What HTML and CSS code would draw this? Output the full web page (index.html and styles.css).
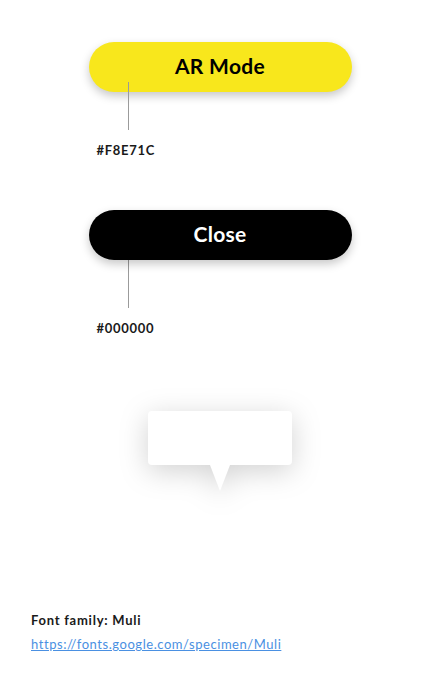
FILE: index.html
```html
<!DOCTYPE html>
<html lang="en">
<head>
  <meta charset="UTF-8">
  <meta name="viewport" content="width=device-width, initial-scale=1.0">
  <title>AR Mode – Style Guide</title>
  <link rel="stylesheet" href="styles.css">
</head>
<body>
  <main class="guide">
    <div class="swatch">
      <button class="pill pill-yellow">AR Mode</button>
      <div class="pointer pointer-over"></div>
      <div class="code">#F8E71C</div>
    </div>

    <div class="swatch swatch-next">
      <button class="pill pill-black">Close</button>
      <div class="pointer"></div>
      <div class="code">#000000</div>
    </div>

    <div class="tooltip">
      <div class="tooltip-box"></div>
      <div class="tooltip-arrow"></div>
    </div>

    <footer class="font-info">
      <p class="font-name">Font family: Muli</p>
      <a class="font-link" href="#">https://fonts.google.com/specimen/Muli</a>
    </footer>
  </main>
</body>
</html>
```

FILE: styles.css
```css
body {
  margin: 0;
  background: #fff;
  font-family: Lato, "Noto Sans", sans-serif;
  color: #1a1a1a;
}
.guide {
  padding-top: 42px;
}
.swatch {
  width: 263px;
  margin: 0 auto;
}
.swatch-next {
  margin-top: 52px;
}
.pill {
  position: relative;
  display: block;
  width: 100%;
  height: 50px;
  padding: 0 0 4px;
  border: none;
  border-radius: 25px;
  font-family: inherit;
  font-size: 21px;
  font-weight: 700;
  letter-spacing: 0.3px;
  box-shadow: 0 4px 10px rgba(0, 0, 0, 0.22);
  cursor: pointer;
}
.pill-yellow {
  background: #f8e71c;
  color: #000;
}
.pill-black {
  background: #000;
  color: #fff;
}
.pointer {
  width: 1px;
  height: 48px;
  margin-left: 39px;
  background: #9b9b9b;
}
.pointer-over {
  position: relative;
  margin-top: -10px;
}
.code {
  margin: 12px 0 0 8px;
  font-size: 13px;
  line-height: 16px;
  font-weight: 700;
  letter-spacing: 0.7px;
}
.tooltip {
  width: 144px;
  margin: 75px auto 0;
  filter: drop-shadow(0 6px 14px rgba(0, 0, 0, 0.18));
}
.tooltip-box {
  height: 54px;
  background: #fff;
  border-radius: 4px;
}
.tooltip-arrow {
  width: 0;
  height: 0;
  margin: 0 auto;
  border-left: 10px solid transparent;
  border-right: 10px solid transparent;
  border-top: 26px solid #fff;
}
.font-info {
  margin-top: 121px;
  padding-left: 31px;
  font-size: 13px;
  line-height: 16px;
  letter-spacing: 0.55px;
}
.font-name {
  margin: 0;
  font-weight: 700;
  letter-spacing: 0.75px;
}
.font-link {
  display: inline-block;
  margin-top: 8px;
  color: #4a90e2;
}
```
